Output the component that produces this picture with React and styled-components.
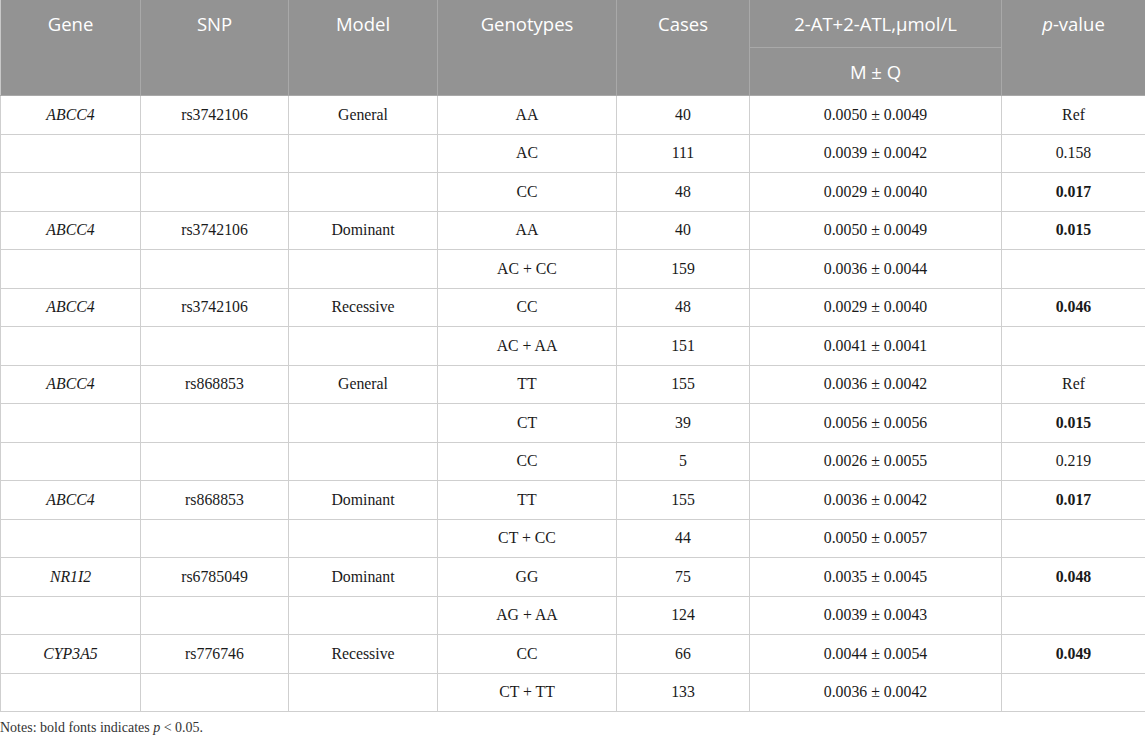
import React from "react";
import styled, { createGlobalStyle } from "styled-components";

const GlobalStyle = createGlobalStyle`
  html, body {
    margin: 0;
    padding: 0;
    background: #ffffff;
  }
`;

const Page = styled.div`
  width: 1145px;
`;

const Table = styled.table`
  width: 1145px;
  border-collapse: collapse;
  table-layout: fixed;
`;

const HeadCell = styled.th`
  background: #939393;
  color: #ffffff;
  font-family: "Open Sans", "Noto Sans", sans-serif;
  font-weight: 400;
  font-size: 18.5px;
  text-align: center;
  vertical-align: top;
  border: 1px solid #a9a9a9;
  height: 47px;
  padding: 0;
  line-height: 47px;
  border-top: none;
  ${(p) => p.$left && "border-left-color: #c8c8c8;"}
  ${(p) => p.$right && "border-right-color: #c8c8c8;"}
`;

const Cell = styled.td`
  font-family: "Liberation Serif", "Times New Roman", serif;
  font-size: 15.8px;
  color: #1a1a1a;
  text-align: center;
  vertical-align: middle;
  border: 1px solid #cfcfcf;
  height: 37.5px;
  padding: 0;
  font-style: ${(p) => (p.$italic ? "italic" : "normal")};
  font-weight: ${(p) => (p.$bold ? 700 : 400)};
`;

const Note = styled.p`
  margin: 8px 0 0 0;
  font-family: "Liberation Serif", "Times New Roman", serif;
  font-size: 14px;
  color: #333333;
`;

const rows = [
  ["ABCC4", "rs3742106", "General", "AA", "40", "0.0050 ± 0.0049", "Ref", false],
  ["", "", "", "AC", "111", "0.0039 ± 0.0042", "0.158", false],
  ["", "", "", "CC", "48", "0.0029 ± 0.0040", "0.017", true],
  ["ABCC4", "rs3742106", "Dominant", "AA", "40", "0.0050 ± 0.0049", "0.015", true],
  ["", "", "", "AC + CC", "159", "0.0036 ± 0.0044", "", false],
  ["ABCC4", "rs3742106", "Recessive", "CC", "48", "0.0029 ± 0.0040", "0.046", true],
  ["", "", "", "AC + AA", "151", "0.0041 ± 0.0041", "", false],
  ["ABCC4", "rs868853", "General", "TT", "155", "0.0036 ± 0.0042", "Ref", false],
  ["", "", "", "CT", "39", "0.0056 ± 0.0056", "0.015", true],
  ["", "", "", "CC", "5", "0.0026 ± 0.0055", "0.219", false],
  ["ABCC4", "rs868853", "Dominant", "TT", "155", "0.0036 ± 0.0042", "0.017", true],
  ["", "", "", "CT + CC", "44", "0.0050 ± 0.0057", "", false],
  ["NR1I2", "rs6785049", "Dominant", "GG", "75", "0.0035 ± 0.0045", "0.048", true],
  ["", "", "", "AG + AA", "124", "0.0039 ± 0.0043", "", false],
  ["CYP3A5", "rs776746", "Recessive", "CC", "66", "0.0044 ± 0.0054", "0.049", true],
  ["", "", "", "CT + TT", "133", "0.0036 ± 0.0042", "", false],
];

export default function App() {
  return (
    <Page>
      <GlobalStyle />
      <Table>
        <colgroup>
          <col style={{ width: 140 }} />
          <col style={{ width: 148 }} />
          <col style={{ width: 149 }} />
          <col style={{ width: 179 }} />
          <col style={{ width: 133 }} />
          <col style={{ width: 252 }} />
          <col style={{ width: 144 }} />
        </colgroup>
        <thead>
          <tr>
            <HeadCell rowSpan={2} $left>Gene</HeadCell>
            <HeadCell rowSpan={2}>SNP</HeadCell>
            <HeadCell rowSpan={2}>Model</HeadCell>
            <HeadCell rowSpan={2}>Genotypes</HeadCell>
            <HeadCell rowSpan={2}>Cases</HeadCell>
            <HeadCell>2-AT+2-ATL,µmol/L</HeadCell>
            <HeadCell rowSpan={2} $right>
              <i>p</i>-value
            </HeadCell>
          </tr>
          <tr>
            <HeadCell>M ± Q</HeadCell>
          </tr>
        </thead>
        <tbody>
          {rows.map((r, i) => (
            <tr key={i}>
              <Cell $italic>{r[0]}</Cell>
              <Cell>{r[1]}</Cell>
              <Cell>{r[2]}</Cell>
              <Cell>{r[3]}</Cell>
              <Cell>{r[4]}</Cell>
              <Cell>{r[5]}</Cell>
              <Cell $bold={r[7]}>{r[6]}</Cell>
            </tr>
          ))}
        </tbody>
      </Table>
      <Note>
        Notes: bold fonts indicates <i>p</i> &lt; 0.05.
      </Note>
    </Page>
  );
}
